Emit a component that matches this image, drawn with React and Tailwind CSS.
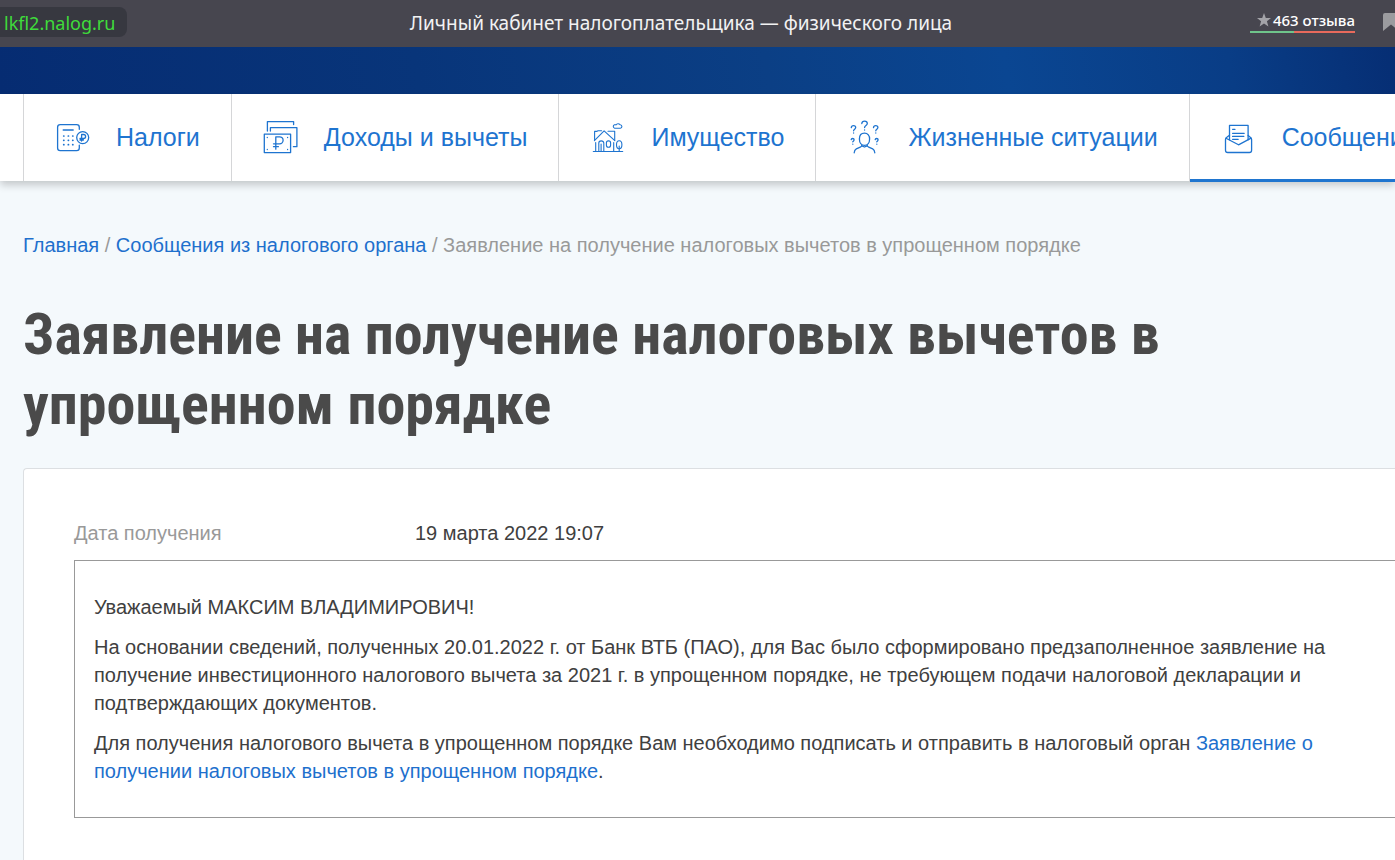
const stroke = { fill: "none", stroke: "currentColor", strokeWidth: 1.3, strokeLinecap: "round", strokeLinejoin: "round" };

function Icon({ children }) {
  return (
    <svg viewBox="0 0 36 37" className="h-[37px] w-9 shrink-0" aria-hidden="true" {...stroke}>
      {children}
    </svg>
  );
}

function TaxesIcon() {
  return (
    <Icon>
      <path d="M24.3 10.3V8.2Q24.3 5.6 21.7 5.6H5.2Q2.6 5.6 2.6 8.2V29Q2.6 31.6 5.2 31.6H21.7Q24.3 31.6 24.3 29V26.2" />
      <path d="M8.2 11H18.2" />
      {[17, 21.3, 25.7].map((y) => (
        <path key={y} strokeWidth="1.7" d={`M8.7 ${y}h.2M13.3 ${y}h.2M17.7 ${y}h.2`} />
      ))}
      <circle cx="27.7" cy="18.6" r="6" />
      <path d="M26.6 22V15.5H28.6a2 2 0 0 1 0 4H25M25 21h3.4" />
    </Icon>
  );
}

function IncomeIcon() {
  return (
    <Icon>
      <path d="M4.4 12V2.6H30.6V5.6" />
      <path d="M7.4 12V8.7H33.9V27.7H30.4" />
      <path d="M1.3 15.2H27.6V33.6H1.3Z" />
      <path d="M12.8 30.2V17.8H16.6a3.5 3.5 0 0 1 0 7H10.5M10.5 27.7H15.4" />
      <path d="M4.3 18.3v.2M24.6 18.3v.2M4.3 30.4v.2M24.6 30.4v.2" />
    </Icon>
  );
}

function PropertyIcon() {
  return (
    <Icon>
      <g strokeWidth="1.1">
        <path d="M3.3 32.5H32.7" />
        <path d="M4.4 21.7 14.1 11.9 24.8 21.7" />
        <path d="M4.6 20.8V12.4H6.7L8 11.8H11.6M18 12.3H24.7V21.2" />
        <path d="M5.7 23.5V32.3M23.7 23.5V32.3" />
        <path d="M8.8 32.3V24Q8.8 21.9 11.2 21.9T13.8 24V32.3M11.1 25V32.3" />
        <rect x="16.4" y="21.9" width="4.2" height="6.4" rx="2" />
        <ellipse cx="29.2" cy="25.7" rx="2.7" ry="4" />
        <path d="M29.2 27V32.4" />
        <path d="M24.6 9.2a1.8 1.8 0 0 1-.2-3.4q1.1-.2 1.5.1a2.5 2.5 0 0 1 4.2-.1q1.8.1 1.8 1.8 0 1.6-1.5 1.6Z" />
      </g>
    </Icon>
  );
}

function LifeIcon() {
  return (
    <Icon>
      <path d="M17.5 14.2c-3.4 0-5.1 2.5-5.1 5.8 0 3.5 2 6.4 5.1 6.4s5.1-2.9 5.1-6.4c0-3.3-1.7-5.8-5.1-5.8Z" />
      <path d="M14.8 26.2q.2 1.3-1.5 2l-4 1.6q-1.9.9-2.1 4M20.2 26.2q-.2 1.3 1.5 2l4 1.6q1.9.9 2.1 4M14.8 26.8l2.7 1.2 2.7-1.2" />
      <path d="M14.8 4.5c.1-1.5 1.2-2.3 2.8-2.3s2.7.9 2.7 2.3c0 2-2.7 2-2.7 4M17.6 11v.1" />
      <path d="M4.3 8.6c.1-1.3.9-2 2.2-2s2.2.7 2.2 1.9c0 1.6-2.1 1.7-2.1 3.3M6.6 14v.1" />
      <path d="M26.5 8.6c.1-1.3.9-2 2.2-2s2.2.7 2.2 1.9c0 1.6-2.1 1.7-2.1 3.3M28.8 14v.1" />
      <path d="M4.2 20.6q.1-1.1 1.5-1.1t1.4 1.2q0 1-1.3 2.1M5.8 25.1v.1" />
      <path d="M28.2 20.6q.1-1.1 1.5-1.1t1.4 1.2q0 1-1.3 2.1M29.8 25.1v.1" />
    </Icon>
  );
}

function MessagesIcon() {
  return (
    <Icon>
      <path d="M8.5 20.8V6.4H27.1V20.8" />
      <path d="M8.5 16.2 5.8 18.3Q4.5 19.2 4.5 20.5V31.3Q4.5 33.5 6.7 33.5H28.4Q30.6 33.5 30.6 31.3V20.5Q30.6 19.2 29.3 18.3L27.1 16.4" />
      <path d="M5 19.2 17.5 25.8 30.1 19.2" />
      <path d="M11.6 10.3H14M11.6 14.3H23.2M11.6 17.4H22.8M11.6 20.3H17.2" />
    </Icon>
  );
}

const sections = [
  { label: "Налоги", Glyph: TaxesIcon },
  { label: "Доходы и вычеты", Glyph: IncomeIcon },
  { label: "Имущество", Glyph: PropertyIcon },
  { label: "Жизненные ситуации", Glyph: LifeIcon },
  { label: "Сообщения", Glyph: MessagesIcon, active: true },
];

function BrowserBar() {
  return (
    <div className="flex h-[47px] items-center bg-[#47464f] font-['Noto_Sans',sans-serif]">
      <div className="mt-[7px] flex h-[30px] w-[127px] shrink-0 items-center self-start rounded-r-lg bg-[#373840] pt-0.5 pl-1 text-[18px] leading-7 text-[#3fdc3b]">
        lkfl2.nalog.ru
      </div>
      <div className="min-w-0 flex-1 truncate text-center text-[19px] text-[#f2f2f3]">
        Личный кабинет налогоплательщика — физического лица
      </div>
      <div className="flex w-40 shrink-0 items-center justify-between overflow-hidden pb-1 pl-[15px]">
        <a href="#reviews" className="block w-[105px] shrink-0 text-[15px] leading-5 font-medium text-white">
          <span className="flex items-center justify-end gap-0.5 pb-px whitespace-nowrap">
            <svg viewBox="0 0 14 14" className="size-[14px] shrink-0 fill-[#a3a3a8]" aria-hidden="true">
              <path d="M7 0 8.8 4.9 14 5.1 9.9 8.3 11.4 13.6 7 10.6 2.6 13.6 4.1 8.3 0 5.1 5.2 4.9Z" />
            </svg>
            463 отзыва
          </span>
          <span className="flex h-0.5">
            <span className="w-11 bg-[#6fc48b]" />
            <span className="flex-1 bg-[#e96a5c]" />
          </span>
        </a>
        <button type="button" aria-label="Закладки" className="w-3 shrink-0 overflow-hidden">
          <svg viewBox="0 0 16 18" className="h-[18px] w-4 max-w-none fill-[#9b9b9f]">
            <path d="M2 0H14Q16 0 16 2V18L8 11.5 0 18V2Q0 0 2 0Z" />
          </svg>
        </button>
      </div>
    </div>
  );
}

function MainNav() {
  return (
    <nav className="relative h-[87px] bg-white pl-[23px] shadow-[0_4px_8px_0_rgba(0,0,0,0.2)]">
      <ul className="flex h-full overflow-x-clip">
        {sections.map(({ label, Glyph, active }) => (
          <li key={label} className="relative shrink-0 border-l border-[#d5d6d8]">
            <a href="#section" className="flex h-full items-center gap-[25px] px-[31px] text-[25px] whitespace-nowrap text-[#1e74d0]">
              <Glyph />
              {label}
            </a>
            {active && <span className="absolute inset-x-0 -bottom-px h-[3px] bg-[#1f75cf]" />}
          </li>
        ))}
      </ul>
    </nav>
  );
}

export default function App() {
  return (
    <div className="flex min-h-screen flex-col overflow-x-clip bg-[#f4f9fc] font-['Liberation_Sans',Arial,sans-serif] text-xl text-[#404040]">
      <BrowserBar />
      <div className="h-[47px] bg-[linear-gradient(80deg,#062c72_0%,#08357a_30%,#0b3f85_55%,#0a4692_72%,#093d86_88%,#062e74_100%)]" />
      <MainNav />
      <main className="flex flex-1 flex-col pt-[50px] pl-[23px]">
        <div className="leading-7 text-[#999]">
          <a href="#home" className="text-[#1e70cd]">Главная</a> /{" "}
          <a href="#messages" className="text-[#1e70cd]">Сообщения из налогового органа</a> / Заявление на
          получение налоговых вычетов в упрощенном порядке
        </div>
        <h1 className="mt-10 max-w-[1200px] font-['Roboto_Condensed','Liberation_Sans_Narrow',sans-serif] text-[58px] leading-[70px] font-bold text-[#4a4a4a]">
          Заявление на получение налоговых вычетов в упрощенном порядке
        </h1>
        <section className="mt-[29px] flex-1 rounded-tl border-t border-l border-[#dcdfe2] bg-white pt-[50px] pb-10 pl-[50px]">
          <dl className="flex leading-7">
            <dt className="w-[341px] text-[#999]">Дата получения</dt>
            <dd>19 марта 2022 19:07</dd>
          </dl>
          <div className="mt-[13px] space-y-3 border-y border-l border-[#999] px-[19px] py-8 leading-7">
            <p>Уважаемый МАКСИМ ВЛАДИМИРОВИЧ!</p>
            <p>
              На основании сведений, полученных 20.01.2022 г. от Банк ВТБ (ПАО), для Вас было сформировано
              предзаполненное заявление на получение инвестиционного налогового вычета за 2021 г. в упрощенном
              порядке, не требующем подачи налоговой декларации и подтверждающих документов.
            </p>
            <p>
              Для получения налогового вычета в упрощенном порядке Вам необходимо подписать и отправить в налоговый
              орган{" "}
              <a href="#application" className="text-[#1e70cd]">
                Заявление о получении налоговых вычетов в упрощенном порядке
              </a>
              .
            </p>
          </div>
        </section>
      </main>
    </div>
  );
}
